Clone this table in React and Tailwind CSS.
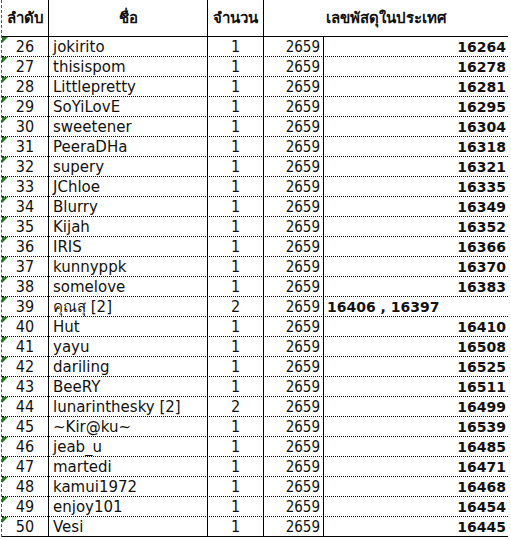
import React from "react";

const rows = [
  [26, "jokirito", 1, "16264"],
  [27, "thisispom", 1, "16278"],
  [28, "Littlepretty", 1, "16281"],
  [29, "SoYiLovE", 1, "16295"],
  [30, "sweetener", 1, "16304"],
  [31, "PeeraDHa", 1, "16318"],
  [32, "supery", 1, "16321"],
  [33, "JChloe", 1, "16335"],
  [34, "Blurry", 1, "16349"],
  [35, "Kijah", 1, "16352"],
  [36, "IRIS", 1, "16366"],
  [37, "kunnyppk", 1, "16370"],
  [38, "somelove", 1, "16383"],
  [39, "คุณสุ [2]", 2, "16406 , 16397", true],
  [40, "Hut", 1, "16410"],
  [41, "yayu", 1, "16508"],
  [42, "dariling", 1, "16525"],
  [43, "BeeRY", 1, "16511"],
  [44, "lunarinthesky [2]", 2, "16499"],
  [45, "~Kir@ku~", 1, "16539"],
  [46, "jeab_u", 1, "16485"],
  [47, "martedi", 1, "16471"],
  [48, "kamui1972", 1, "16468"],
  [49, "enjoy101", 1, "16454"],
  [50, "Vesi", 1, "16445"],
];

const cols = "grid grid-cols-[47px_159px_56px_60px_184px]";

// excel "number stored as text" marker
const Flag = () => (
  <svg className="absolute left-0 top-0" width="6" height="6" viewBox="0 0 6 6">
    <polygon points="0,0 6,0 0,6" fill="#1f7a1f" />
  </svg>
);

export default function App() {
  return (
    <div className="w-[511px] h-[540px] bg-white text-[#111] font-['DejaVu_Sans','Noto_Sans',sans-serif] text-[15px]">
      <div className="ml-px w-[507px] border-l border-dashed border-[#555]">
        <div className={`${cols} h-[37px] border-b border-black font-bold`}>
          <div className="flex items-center justify-center border-r border-black">ลำดับ</div>
          <div className="flex items-center justify-center border-r border-black">ชื่อ</div>
          <div className="flex items-center justify-center border-r border-black">จำนวน</div>
          <div className="col-span-2 flex items-center justify-center">เลขพัสดุในประเทศ</div>
        </div>
        {rows.map(([no, name, qty, code, left], i) => (
          <div
            key={no}
            className={`${cols} h-5 border-b ${i === rows.length - 1 ? "border-solid border-black" : "border-dotted border-black"} leading-[20px]`}
          >
            <div className="relative text-center border-r border-black font-['DejaVu_Sans_Condensed','DejaVu_Sans',sans-serif] text-[16px]">
              <Flag />
              {no}
            </div>
            <div className="pl-1 border-r border-black whitespace-nowrap">{name}</div>
            <div className="text-center border-r border-black font-['DejaVu_Sans_Condensed','DejaVu_Sans',sans-serif] text-[16px]">{qty}</div>
            <div className="text-right pr-[3px] border-r border-black font-['DejaVu_Sans_Condensed','DejaVu_Sans',sans-serif]">2659</div>
            <div className={`font-bold text-[14px] ${left ? "text-left pl-[3px]" : "text-right pr-[2px]"}`}>{code}</div>
          </div>
        ))}
      </div>
    </div>
  );
}
